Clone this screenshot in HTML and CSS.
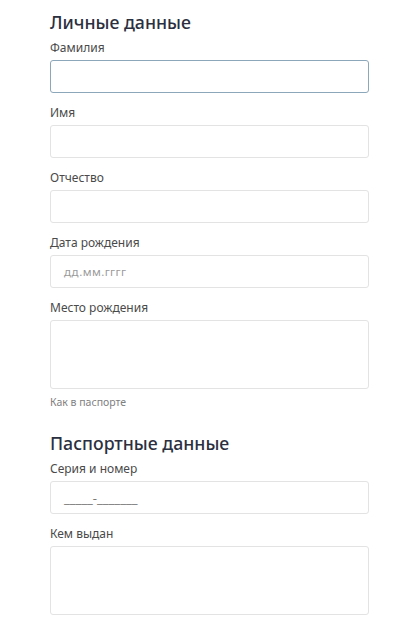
FILE: index.html
```html
<!DOCTYPE html>
<html lang="ru">
<head>
<meta charset="utf-8">
<link rel="stylesheet" href="styles.css">
</head>
<body>
<form class="form">
  <section class="section">
    <h2 class="section-title">Личные данные</h2>
    <div class="field">
      <label class="label">Фамилия</label>
      <div class="input input-focus"></div>
    </div>
    <div class="field">
      <label class="label">Имя</label>
      <div class="input"></div>
    </div>
    <div class="field">
      <label class="label">Отчество</label>
      <div class="input"></div>
    </div>
    <div class="field">
      <label class="label">Дата рождения</label>
      <div class="input"><span class="placeholder">дд.мм.гггг</span></div>
    </div>
    <div class="field field-last">
      <label class="label">Место рождения</label>
      <div class="input textarea"></div>
      <div class="hint">Как в паспорте</div>
    </div>
  </section>
  <section class="section section-2">
    <h2 class="section-title">Паспортные данные</h2>
    <div class="field">
      <label class="label">Серия и номер</label>
      <div class="input"><span class="mask">_____-_______</span></div>
    </div>
    <div class="field">
      <label class="label">Кем выдан</label>
      <div class="input textarea"></div>
    </div>
  </section>
</form>
</body>
</html>
```
FILE: styles.css
```css
html, body {
  margin: 0;
  padding: 0;
  background: #ffffff;
}
body {
  font-family: "Noto Sans", "Open Sans", sans-serif;
  color: #333;
}
.form {
  width: 319px;
  margin-left: 50px;
  padding-top: 10px;
}
.section-title {
  margin: 0 0 6px 0;
  font-size: 17.7px;
  line-height: 24px;
  font-weight: 500;
  color: #2b3040;
}
.field {
  margin-bottom: 12px;
}
.label {
  display: block;
  font-size: 12px;
  line-height: 16px;
  color: #4a4a4a;
  margin-bottom: 4px;
}
.input {
  box-sizing: border-box;
  height: 33px;
  border: 1px solid #e3e3e3;
  border-radius: 3px;
  background: #fff;
  display: flex;
  align-items: center;
  padding-left: 13px;
}
.input-focus {
  border-color: #8ca7b9;
}
.textarea {
  height: 69px;
}
.placeholder {
  font-size: 11.5px;
  letter-spacing: 0.4px;
  color: #9a9a9a;
}
.mask {
  font-size: 13px;
  color: #777;
}
.hint {
  margin-top: 6px;
  font-size: 10.5px;
  line-height: 14px;
  color: #808080;
}
.field-last {
  margin-bottom: 0;
}
.section-2 {
  margin-top: 22px;
}
```
